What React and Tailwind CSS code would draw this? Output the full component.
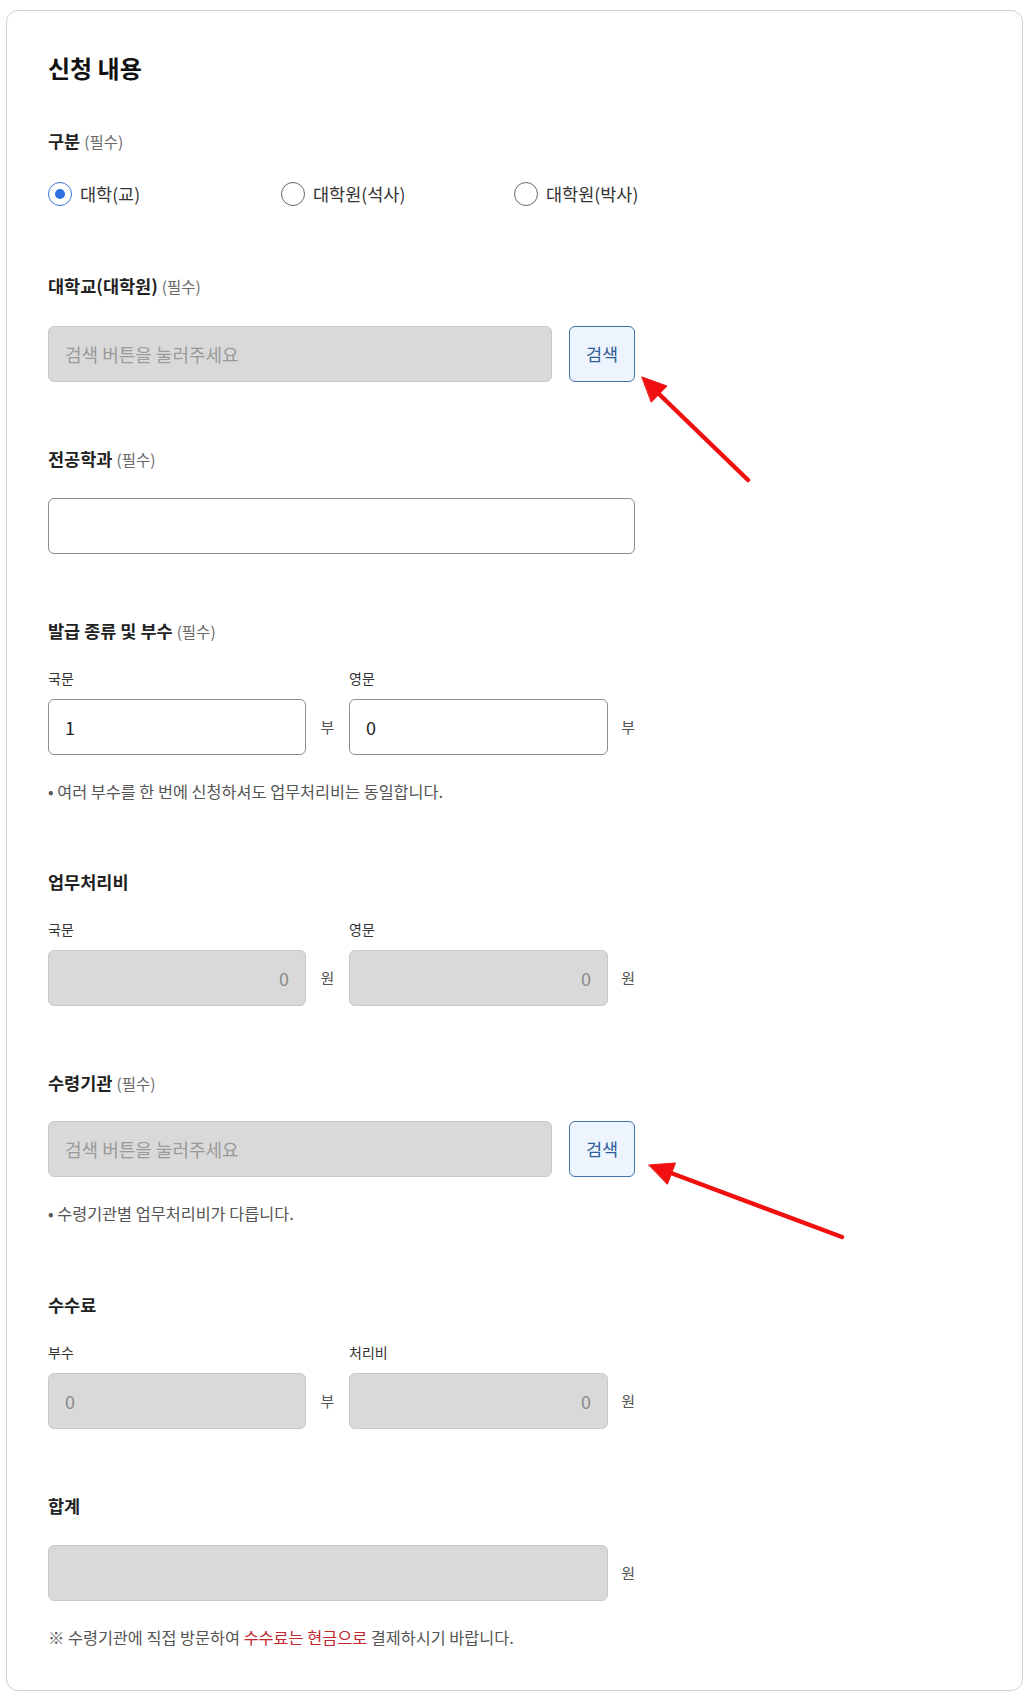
import React from "react";

// 필수 표시가 붙는 섹션 제목
function Label({ children, required = false }) {
  return (
    <div className="h-6 text-[17.5px] font-bold leading-6 text-[#222]">
      {children}
      {required && <span className="ml-1 text-[15.5px] font-normal text-[#6a6a6a]">(필수)</span>}
    </div>
  );
}

function SubLabel({ children }) {
  return <div className="h-5 text-[14px] leading-5 text-[#333]">{children}</div>;
}

function Note({ children }) {
  return <p className="mt-[25px] h-[22px] text-[16.3px] leading-[22px] text-[#555]">{children}</p>;
}

function Radio({ label, checked }) {
  return (
    <label className="flex w-[233px] items-center gap-2">
      <span
        className={`flex h-6 w-6 items-center justify-center rounded-full border ${
          checked ? "border-[#3b74d4]" : "border-[#666]"
        }`}
      >
        {checked && <span className="h-[10px] w-[10px] rounded-full bg-[#2f6fe0]" />}
      </span>
      <span className="text-[17.5px] leading-6 text-[#333]">{label}</span>
    </label>
  );
}

function TextBox({ value = "", placeholder = "", disabled = false, right = false, className = "" }) {
  return (
    <div
      className={`flex h-[56px] items-center rounded-md border px-4 text-[18px] ${
        disabled ? "border-[#c8c8c8] bg-[#d9d9d9] text-[#8a8a8a]" : "border-[#8c8c8c] bg-white text-[#222]"
      } ${right ? "justify-end" : ""} ${className}`}
    >
      {value !== "" ? value : <span className="text-[#9a9a9a]">{placeholder}</span>}
    </div>
  );
}

function SearchRow({ gap = "mt-[28px]" }) {
  return (
    <div className={`${gap} flex gap-[17px]`}>
      <TextBox disabled placeholder="검색 버튼을 눌러주세요" className="w-[504px]" />
      <button className="h-[56px] w-[66px] rounded-md border border-[#4471a8] bg-[#edf4fd] text-[17.5px] text-[#2f5d99]">
        검색
      </button>
    </div>
  );
}

function PairRow({ left, right }) {
  return (
    <div className="mt-[25px] flex">
      <div className="w-[301px]">
        <SubLabel>{left.label}</SubLabel>
        <div className="mt-[11px] flex items-center">
          <TextBox value={left.value} disabled={left.disabled} right={left.right} className="w-[258px]" />
          <span className="w-[43px] text-center text-[15px] text-[#555]">{left.unit}</span>
        </div>
      </div>
      <div>
        <SubLabel>{right.label}</SubLabel>
        <div className="mt-[11px] flex items-center">
          <TextBox value={right.value} disabled={right.disabled} right={right.right} className="w-[259px]" />
          <span className="w-[27px] text-right text-[15px] text-[#555]">{right.unit}</span>
        </div>
      </div>
    </div>
  );
}

function Arrows() {
  return (
    <svg className="pointer-events-none absolute left-0 top-0" width="1034" height="1702">
      <g stroke="#f01010" strokeWidth="4.5" strokeLinecap="round" fill="#f01010">
        <line x1="748" y1="480" x2="659" y2="394" />
        <polygon points="642,377 667,386 651.5,402" strokeLinejoin="round" strokeWidth="1" />
        <line x1="842" y1="1237" x2="671" y2="1173" />
        <polygon points="649,1165 675.5,1163 667.5,1184" strokeLinejoin="round" strokeWidth="1" />
      </g>
    </svg>
  );
}

export default function App() {
  return (
    <div className="relative min-h-[1702px] w-[1034px] bg-white pt-[10px] font-['Noto_Sans_CJK_KR','Noto_Sans',sans-serif]">
      <div className="ml-[6px] w-[1017px] rounded-xl border border-[#cfcfcf] pb-[42px] pl-[41px] pt-[41px]">
        <h2 className="h-8 text-[24px] font-bold leading-8 text-[#111]">신청 내용</h2>

        {/* 구분 */}
        <div className="mt-[45px]">
          <Label required>구분</Label>
          <div className="mt-[29px] flex">
            <Radio label="대학(교)" checked />
            <Radio label="대학원(석사)" />
            <Radio label="대학원(박사)" />
          </div>
        </div>

        <div className="mt-[68px]">
          <Label required>대학교(대학원)</Label>
          <SearchRow />
        </div>

        <div className="mt-[65px]">
          <Label required>전공학과</Label>
          <TextBox className="mt-[27px] w-[587px]" />
        </div>

        <div className="mt-[65px]">
          <Label required>발급 종류 및 부수</Label>
          <PairRow
            left={{ label: "국문", value: "1", unit: "부" }}
            right={{ label: "영문", value: "0", unit: "부" }}
          />
          <Note>• 여러 부수를 한 번에 신청하셔도 업무처리비는 동일합니다.</Note>
        </div>

        <div className="mt-[68px]">
          <Label>업무처리비</Label>
          <PairRow
            left={{ label: "국문", value: "0", unit: "원", disabled: true, right: true }}
            right={{ label: "영문", value: "0", unit: "원", disabled: true, right: true }}
          />
        </div>

        <div className="mt-[65px]">
          <Label required>수령기관</Label>
          <SearchRow gap="mt-[26px]" />
          <Note>• 수령기관별 업무처리비가 다릅니다.</Note>
        </div>

        <div className="mt-[69px]">
          <Label>수수료</Label>
          <PairRow
            left={{ label: "부수", value: "0", unit: "부", disabled: true }}
            right={{ label: "처리비", value: "0", unit: "원", disabled: true, right: true }}
          />
        </div>

        <div className="mt-[65px]">
          <Label>합계</Label>
          <div className="mt-[27px] flex items-center">
            <TextBox disabled className="w-[560px]" />
            <span className="w-[27px] text-right text-[15px] text-[#555]">원</span>
          </div>
          <p className="mt-[25px] text-[16.3px] leading-[22px] text-[#555]">
            ※ 수령기관에 직접 방문하여 <span className="text-[#c0262e]">수수료는 현금으로</span> 결제하시기 바랍니다.
          </p>
        </div>
      </div>
      <Arrows />
    </div>
  );
}
